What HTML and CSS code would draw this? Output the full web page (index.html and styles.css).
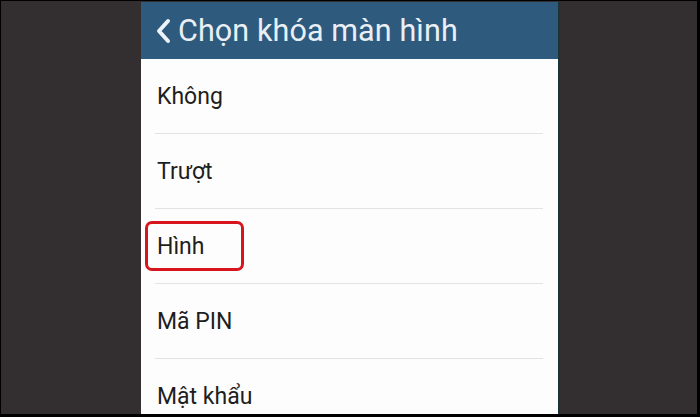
FILE: index.html
```html
<!DOCTYPE html>
<html lang="vi">
<head>
<meta charset="utf-8">
<title>Chọn khóa màn hình</title>
<link rel="stylesheet" href="styles.css">
</head>
<body>
<div class="frame">
  <div class="panel">
    <div class="header">
      <svg class="back" width="16" height="26" viewBox="0 0 16 26">
        <polyline points="13,3 4,13 13,23" fill="none" stroke="#eef3f7" stroke-width="4" stroke-linecap="round" stroke-linejoin="round"/>
      </svg>
      <span class="title">Chọn khóa màn hình</span>
    </div>
    <ul class="list">
      <li class="row">Không</li>
      <li class="row">Trượt</li>
      <li class="row"><span class="hl">Hình</span></li>
      <li class="row">Mã PIN</li>
      <li class="row last">Mật khẩu</li>
    </ul>
  </div>
</div>
</body>
</html>
```

FILE: styles.css
```css
html, body {
  margin: 0;
  padding: 0;
  background: #000;
  width: 700px;
  height: 417px;
  overflow: hidden;
}
.frame {
  margin: 1px 3px 0 1px;
  width: 696px;
  height: 413px;
  background: #332f30;
  overflow: hidden;
}
.panel {
  margin: 1px 0 0 140px;
  width: 417px;
  height: 412px;
  background: #fdfdfd;
  border-right: 2px solid #1b3536;
  overflow: hidden;
  font-family: Roboto, "Noto Sans", sans-serif;
}
.header {
  height: 57px;
  background: #2e5a7e;
  display: flex;
  align-items: center;
  padding-left: 14px;
  box-sizing: border-box;
}
.back {
  display: block;
  margin-top: 1px;
  margin-right: 7px;
}
.title {
  color: #e9eff4;
  font-size: 30.5px;
  line-height: 34px;
  letter-spacing: 0.1px;
}
.list {
  list-style: none;
  margin: 0 15px 0 14px;
  padding: 0;
}
.row {
  position: relative;
  padding: 24px 0 22px 2px;
  font-size: 23px;
  line-height: 28px;
  color: #1e1e1e;
  border-bottom: 1px solid #e3e3e3;
}
.row.last {
  border-bottom: none;
}
.hl {
  position: relative;
}
.hl::before {
  content: "";
  position: absolute;
  left: -12px;
  top: -12px;
  width: 93px;
  height: 44px;
  border: 3px solid #d8141c;
  border-radius: 7px;
}
```
